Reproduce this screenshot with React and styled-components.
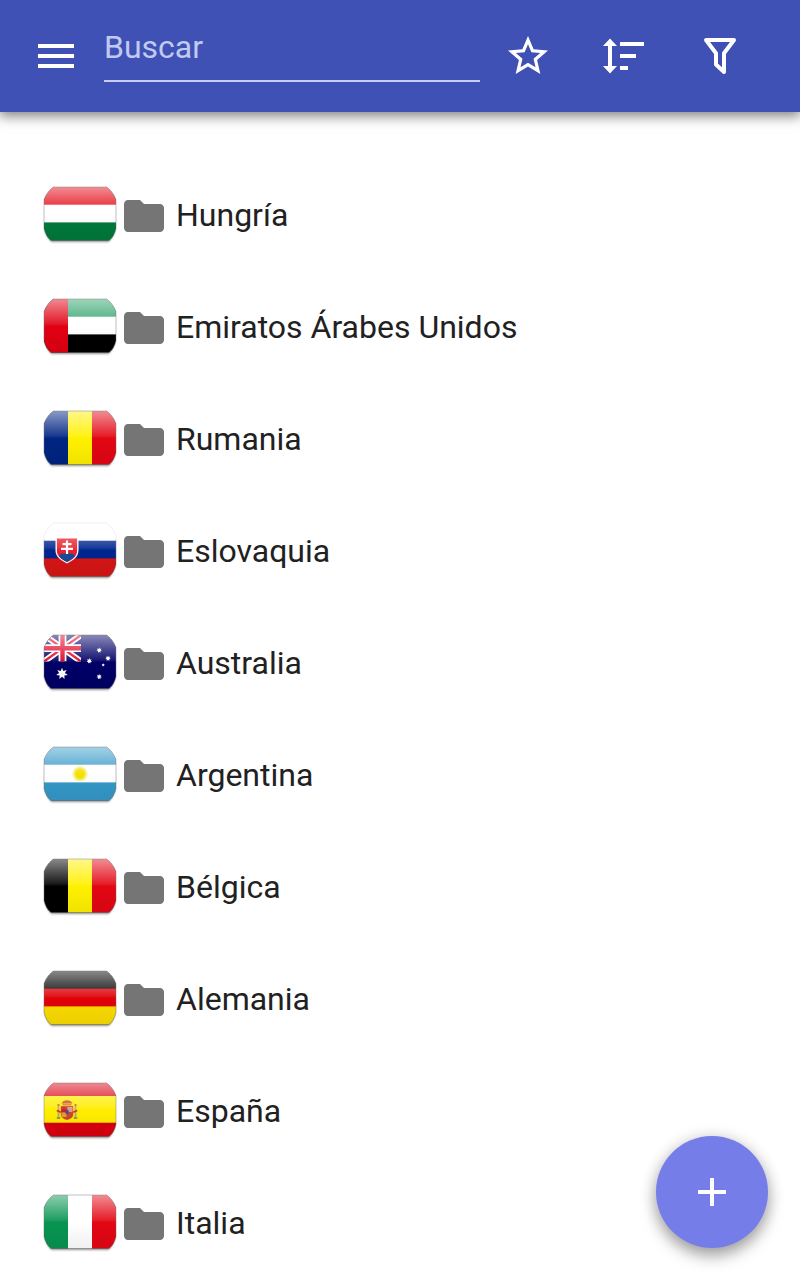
import React, { useState } from "react";
import { createGlobalStyle, styled } from "styled-components";

const GlobalStyle = createGlobalStyle`
  body {
    margin: 0;
    background-color: #ffffff;
    font-family: Roboto, "Liberation Sans", sans-serif;
  }
`;

const Page = styled.div`
  height: 1280px;
  width: 100%;
  display: flex;
  flex-direction: column;
  overflow: hidden;
  position: relative;
`;

const Toolbar = styled.header`
  height: 112px;
  flex: none;
  box-sizing: border-box;
  display: flex;
  align-items: center;
  padding: 0 56px 0 32px;
  background-color: #3f51b5;
  box-shadow: 0 3px 12px 1px rgba(0, 0, 0, 0.5);
  color: #ffffff;
`;

const IconButton = styled.button`
  width: 48px;
  height: 48px;
  flex: none;
  padding: 0;
  margin-left: ${(props) => props.$gap || 0}px;
  border: none;
  background: none;
  color: inherit;

  svg {
    display: block;
  }
`;

const Search = styled.input`
  width: 376px;
  height: 66px;
  box-sizing: border-box;
  margin: 0 0 14px 24px;
  padding: 0 0 2px;
  outline: 0;
  border: none;
  border-bottom: 2px solid #c5cdf2;
  border-radius: 0;
  background: none;
  color: #ffffff;
  font-family: inherit;
  font-size: 32px;

  &::placeholder {
    color: #c1caf0;
    opacity: 1;
  }
`;

const List = styled.ul`
  list-style: none;
  margin: 0;
  padding: 48px 40px 0;
`;

const Row = styled.li`
  height: 112px;
  display: flex;
  align-items: center;
  color: #212121;
  font-size: 32px;
  white-space: nowrap;

  svg {
    flex: none;
  }
`;

const Name = styled.span`
  margin-left: 8px;
  padding-bottom: 2px;
  line-height: 40px;
`;

const AddButton = styled.button`
  position: absolute;
  right: 32px;
  bottom: 32px;
  width: 112px;
  height: 112px;
  display: flex;
  align-items: center;
  justify-content: center;
  padding: 0;
  border: none;
  border-radius: 50%;
  background-color: #757de8;
  color: #ffffff;
  box-shadow: 0 8px 16px rgba(0, 0, 0, 0.34), 0 0 16px rgba(0, 0, 0, 0.12);
`;

const Icon = ({ d }) => (
  <svg width="48" height="48" viewBox="0 0 24 24" fill="currentColor">
    <path d={d} />
  </svg>
);

const SortIcon = () => (
  <svg width="48" height="48" viewBox="0 0 48 48" fill="currentColor">
    <path d="M10 6.500 17 14h-5v20h5l-7 7.500L3 34h5V14H3zM20 10h24v4H20zM20 22h16v4H20zM20 34h8v4h-8z" />
  </svg>
);

const FilterIcon = () => (
  <svg width="48" height="48" viewBox="0 0 48 48">
    <path
      d="M10 8h28L28 21.200V40L20 32.500V21.200z"
      fill="none"
      stroke="currentColor"
      strokeWidth="4"
      strokeLinejoin="round"
    />
  </svg>
);

const Stripes = ({ colors, vertical }) =>
  colors.map((color, i) =>
    vertical ? (
      <rect key={i} x={i * 24} width="24" height="54" fill={color} />
    ) : (
      <rect key={i} y={i * 17.7} width="72" height="18.6" fill={color} />
    )
  );

const Emirates = () => (
  <>
    <Stripes colors={["#2fa36b", "#ffffff", "#000000"]} />
    <rect width="24" height="54" fill="#e00012" />
  </>
);

const Slovakia = () => (
  <>
    <Stripes colors={["#ffffff", "#00258f", "#d51515"]} />
    <path d="M11.500 14h23v13.500c0 6.500-5.500 10-11.500 13-6-3-11.500-6.500-11.500-13z" fill="#ffffff" />
    <path d="M12.900 15.400h20.200v12.400c0 5.500-4.500 8.500-10.100 11.300-5.600-2.800-10.100-5.800-10.100-11.300z" fill="#e8202b" />
    <path d="M15 33c2-3 4-3 5-1.500 1.500-3 4.500-3 6 0 1-1.500 3-1.500 5 1.500-2 2.600-4.500 4.300-8 6.100-3.500-1.800-6-3.500-8-6.100z" fill="#174a9c" />
    <path d="M23 17.500v13.500M18.500 21.200h9M17 25.800h12" stroke="#ffffff" strokeWidth="2.200" />
  </>
);

const starPoints = (cx, cy, r, count) => {
  const points = [];
  for (let i = 0; i < count * 2; i++) {
    const radius = i % 2 ? r * 0.5 : r;
    const angle = (Math.PI * i) / count - Math.PI / 2;
    points.push(`${cx + radius * Math.cos(angle)},${cy + radius * Math.sin(angle)}`);
  }
  return points.join(" ");
};

const Australia = () => (
  <>
    <rect width="72" height="54" fill="#000066" />
    <svg width="37" height="26.500" viewBox="0 0 37 26.5">
      <path d="M0 0 37 26.500M37 0 0 26.500" stroke="#ffffff" strokeWidth="6" />
      <path d="M0 0 37 26.500M37 0 0 26.500" stroke="#e00024" strokeWidth="2.300" />
      <path d="M18.500 0v26.500M0 13.200h37" stroke="#ffffff" strokeWidth="7.800" />
      <path d="M18.500 0v26.500M0 13.200h37" stroke="#e00024" strokeWidth="4.400" />
    </svg>
    <polygon points={starPoints(18, 38.7, 6, 7)} fill="#ffffff" />
    <polygon points={starPoints(55.2, 15.2, 2.9, 7)} fill="#ffffff" />
    <polygon points={starPoints(45.3, 26, 2.9, 7)} fill="#ffffff" />
    <polygon points={starPoints(64, 23.3, 2.9, 7)} fill="#ffffff" />
    <polygon points={starPoints(59.2, 30, 1.7, 5)} fill="#ffffff" />
    <polygon points={starPoints(55.2, 41.7, 2.9, 7)} fill="#ffffff" />
  </>
);

const Argentina = () => (
  <>
    <Stripes colors={["#3b9cc9", "#ffffff", "#3498c7"]} />
    <circle cx="36" cy="26.800" r="8" fill="#f5ef5c" opacity="0.35" />
    <circle cx="36" cy="26.800" r="6.800" fill="#f2e636" opacity="0.65" />
    <circle cx="36" cy="26.800" r="5" fill="#f5df00" />
  </>
);

const Spain = () => (
  <>
    <rect width="72" height="54" fill="#d90010" />
    <rect y="13" width="72" height="26.700" fill="#ffed00" />
    <path d="M17.500 20.500c1.500-4.500 9.500-4.500 11 0z" fill="#c54b24" />
    <path d="M18.500 21.700h9" stroke="#e07a20" strokeWidth="1.500" />
    <path d="M16.800 23h12.400v8.500c0 3-2.700 4.500-6.200 5.500-3.500-1-6.200-2.500-6.200-5.500z" fill="#c9482f" />
    <path d="M17.500 24h5v5h-5z" fill="#c8212d" />
    <path d="M23.500 24h5v5h-5z" fill="#d59a91" />
    <path d="M17.500 29.500h5v4.500h-5z" fill="#e3a126" />
    <ellipse cx="23" cy="29" rx="1.800" ry="2.200" fill="#5b4587" />
    <path d="M14.500 23v11M31.500 23v11" stroke="#b9a27a" strokeWidth="1.800" />
    <path d="M12.800 27.500l4 1.800M33.200 27.500l-4 1.800M13.500 22h2M30.500 22h2" stroke="#ca3a20" strokeWidth="1.600" />
    <path d="M12.800 35h3.500M29.700 35h3.500" stroke="#77835b" strokeWidth="1.500" />
  </>
);

const shape =
  "M9.500 0H62.500Q68.500 4 72 12.500V41.500Q70 50 65 53.500H7Q2 50 0 41.500V12.500Q3.500 4 9.500 0Z";

const Flag = ({ id, top, children }) => (
  <svg width="80" height="64" viewBox="-4 -3 80 64">
    <defs>
      <clipPath id={`clip-${id}`}>
        <path d={shape} />
      </clipPath>
      <linearGradient id={`gloss-${id}`} x1="0" y1="0" x2="0" y2="1">
        <stop offset="0" stopColor="#ffffff" stopOpacity="0.54" />
        <stop offset="0.46" stopColor="#ffffff" stopOpacity="0.1" />
        <stop offset="0.5" stopColor="#ffffff" stopOpacity="0.01" />
        <stop offset="0.51" stopColor="#000000" stopOpacity="0" />
        <stop offset="1" stopColor="#000000" stopOpacity="0.06" />
      </linearGradient>
      <linearGradient id={`edge-${id}`} x1="0" y1="0" x2="0" y2="1">
        <stop offset="0" stopColor="#777777" stopOpacity={top} />
        <stop offset="0.3" stopColor="#777777" stopOpacity={top} />
        <stop offset="0.35" stopColor="#777777" stopOpacity="0.5" />
        <stop offset="1" stopColor="#555555" stopOpacity="0.5" />
      </linearGradient>
      <filter id={`blur-${id}`} x="-10%" y="-10%" width="120%" height="130%">
        <feGaussianBlur stdDeviation="0.8" />
      </filter>
    </defs>
    <path
      d="M1 42Q3 51 7.500 54.700H64.500Q69 51 71 42Z"
      fill="#000000"
      opacity="0.5"
      filter={`url(#blur-${id})`}
    />
    <g clipPath={`url(#clip-${id})`}>
      {children}
      <rect width="72" height="54" fill={`url(#gloss-${id})`} />
    </g>
    <path d={shape} fill="none" stroke={`url(#edge-${id})`} strokeWidth="0.900" />
  </svg>
);

const countries = [
  { id: "hu", name: "Hungría", flag: <Stripes colors={["#e30613", "#ffffff", "#00793a"]} /> },
  { id: "ae", name: "Emiratos Árabes Unidos", flag: <Emirates /> },
  { id: "ro", name: "Rumania", flag: <Stripes vertical colors={["#002482", "#fff000", "#e30613"]} /> },
  { id: "sk", name: "Eslovaquia", top: 0.12, flag: <Slovakia /> },
  { id: "au", name: "Australia", flag: <Australia /> },
  { id: "ar", name: "Argentina", flag: <Argentina /> },
  { id: "be", name: "Bélgica", flag: <Stripes vertical colors={["#000000", "#fff000", "#e30613"]} /> },
  { id: "de", name: "Alemania", flag: <Stripes colors={["#000000", "#e00008", "#fadb00"]} /> },
  { id: "es", name: "España", flag: <Spain /> },
  { id: "it", name: "Italia", flag: <Stripes vertical colors={["#079451", "#ffffff", "#e30613"]} /> },
];

const App = () => {
  const [query, setQuery] = useState("");

  const rows = countries.filter((c) =>
    c.name.toLowerCase().includes(query.toLowerCase())
  );

  return (
    <Page>
      <GlobalStyle />
      <Toolbar>
        <IconButton>
          <Icon d="M3 18h18v-2H3v2zm0-5h18v-2H3v2zm0-7v2h18V6H3z" />
        </IconButton>
        <Search
          placeholder="Buscar"
          value={query}
          onChange={(e) => setQuery(e.target.value)}
        />
        <IconButton $gap={24}>
          <Icon d="M22 9.240l-7.190-.62L12 2 9.190 8.630 2 9.240l5.460 4.730L5.820 21 12 17.270 18.180 21l-1.630-7.030L22 9.240zM12 15.400l-3.760 2.270 1-4.280-3.320-2.880 4.380-.38L12 6.100l1.710 4.040 4.380.38-3.320 2.880 1 4.280L12 15.400z" />
        </IconButton>
        <IconButton $gap={48}>
          <SortIcon />
        </IconButton>
        <IconButton $gap={48}>
          <FilterIcon />
        </IconButton>
      </Toolbar>
      <List>
        {rows.map((c) => (
          <Row key={c.id}>
            <Flag id={c.id} top={c.top ?? 0.5}>
              {c.flag}
            </Flag>
            <svg width="48" height="48" viewBox="0 0 24 24" fill="#757575">
              <path d="M10 4H4c-1.100 0-1.990.9-1.990 2L2 18c0 1.100.9 2 2 2h16c1.100 0 2-.9 2-2V8c0-1.100-.9-2-2-2h-8l-2-2z" />
            </svg>
            <Name>{c.name}</Name>
          </Row>
        ))}
      </List>
      <AddButton>
        <Icon d="M19 13h-6v6h-2v-6H5v-2h6V5h2v6h6v2z" />
      </AddButton>
    </Page>
  );
};

export default App;
